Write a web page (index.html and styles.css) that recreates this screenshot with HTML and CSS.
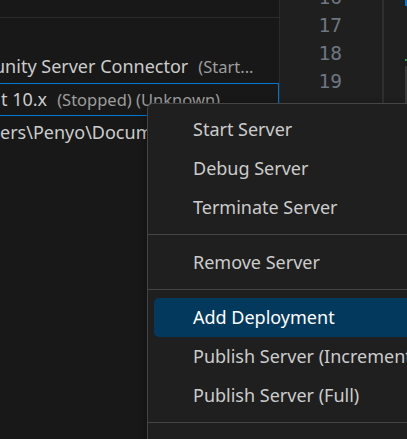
FILE: index.html
```html
<!DOCTYPE html>
<html>
<head>
<meta charset="utf-8">
<link rel="stylesheet" href="styles.css">
</head>
<body>
<div class="window">
  <div class="sidebar">
    <div class="sidebar-top"></div>
    <div class="tree">
      <div class="row"><span class="label lbl1">unity Server Connector</span><span class="desc">(Start...</span></div>
      <div class="row focused"><span class="label lbl2">t 10.x</span><span class="desc">(Stopped) (Unknown)</span></div>
      <div class="row"><span class="label">ers\Penyo\Documents\servers</span></div>
    </div>
  </div>
  <div class="gutter">
    <div class="ln">16</div>
    <div class="ln">17</div>
    <div class="ln">18</div>
    <div class="ln">19</div>
  </div>
  <div class="editor">
    <div class="mark-blue"></div>
    <div class="mark-teal"></div>
    <div class="mark-scroll"></div>
  </div>
</div>
<div class="menu">
  <div class="item">Start Server</div>
  <div class="item">Debug Server</div>
  <div class="item">Terminate Server</div>
  <div class="sep"></div>
  <div class="item">Remove Server</div>
  <div class="sep"></div>
  <div class="item active">Add Deployment</div>
  <div class="item">Publish Server (Incremental)</div>
  <div class="item">Publish Server (Full)</div>
  <div class="sep"></div>
</div>
</body>
</html>
```
FILE: styles.css
```css
html, body {
  margin: 0;
  padding: 0;
  width: 407px;
  height: 439px;
  overflow: hidden;
  background: #181818;
  font-family: "Noto Sans", "Open Sans", sans-serif;
}
.window {
  display: flex;
  width: 407px;
  height: 439px;
}
.sidebar {
  width: 279px;
  flex: none;
  background: #181818;
  border-right: 1px solid #2b2b2b;
  overflow: hidden;
}
.sidebar-top {
  height: 17px;
  border-bottom: 1px solid #2b2b2b;
}
.tree {
  padding-top: 32px;
}
.row {
  height: 33px;
  line-height: 33px;
  font-size: 18px;
  color: #cccccc;
  white-space: nowrap;
  overflow: hidden;
  box-sizing: border-box;
}
.row.focused {
  border: 1px solid #0078d4;
  border-left: none;
  line-height: 31px;
}
.label {
  margin-left: 0;
}
.lbl1 {
  margin-left: -6px;
}
.lbl2 {
  margin-left: 1px;
}
.desc {
  margin-left: 10px;
  font-size: 16.5px;
  color: #9d9d9d;
}
.gutter {
  flex: none;
  background: #1f1f1f;
  border-right: 2px solid #2f2f2f;
  box-sizing: border-box;
  width: 104px;
  padding-right: 40px;
  font-family: "DejaVu Sans Mono", monospace;
  font-size: 19.5px;
  color: #6e7681;
  text-align: right;
  overflow: hidden;
}
.gutter .ln:first-child {
  margin-top: -16px;
}
.ln {
  height: 28px;
  line-height: 28px;
}
.editor {
  flex: 1;
  background: #1f1f1f;
  position: relative;
}
.mark-blue {
  position: absolute;
  right: 0;
  top: 0;
  width: 2px;
  height: 6px;
  background: #0078d4;
}
.mark-teal {
  position: absolute;
  right: 0;
  top: 59px;
  width: 2px;
  height: 2px;
  background: #2ea043;
}
.mark-scroll {
  position: absolute;
  right: 0;
  top: 66px;
  width: 2px;
  height: 40px;
  background: #3a3a3a;
}
.menu {
  position: absolute;
  left: 147px;
  top: 103px;
  width: 260px;
  height: 336px;
  background: #1f1f1f;
  border: 1px solid #454545;
  border-right: none;
  border-bottom: none;
  border-radius: 6px 0 0 0;
  padding: 6px 0 0;
  box-sizing: border-box;
  overflow: hidden;
  box-shadow: 0 2px 8px rgba(0,0,0,0.36);
}
.item {
  height: 39px;
  line-height: 39px;
  margin: 0 0 0 6px;
  padding-left: 39px;
  border-radius: 5px 0 0 5px;
  font-size: 18px;
  color: #cccccc;
  white-space: nowrap;
  overflow: hidden;
}
.item.active {
  background: #04395e;
  color: #ffffff;
}
.sep {
  height: 1px;
  margin: 7px 0 8px;
  background: #454545;
}
```
